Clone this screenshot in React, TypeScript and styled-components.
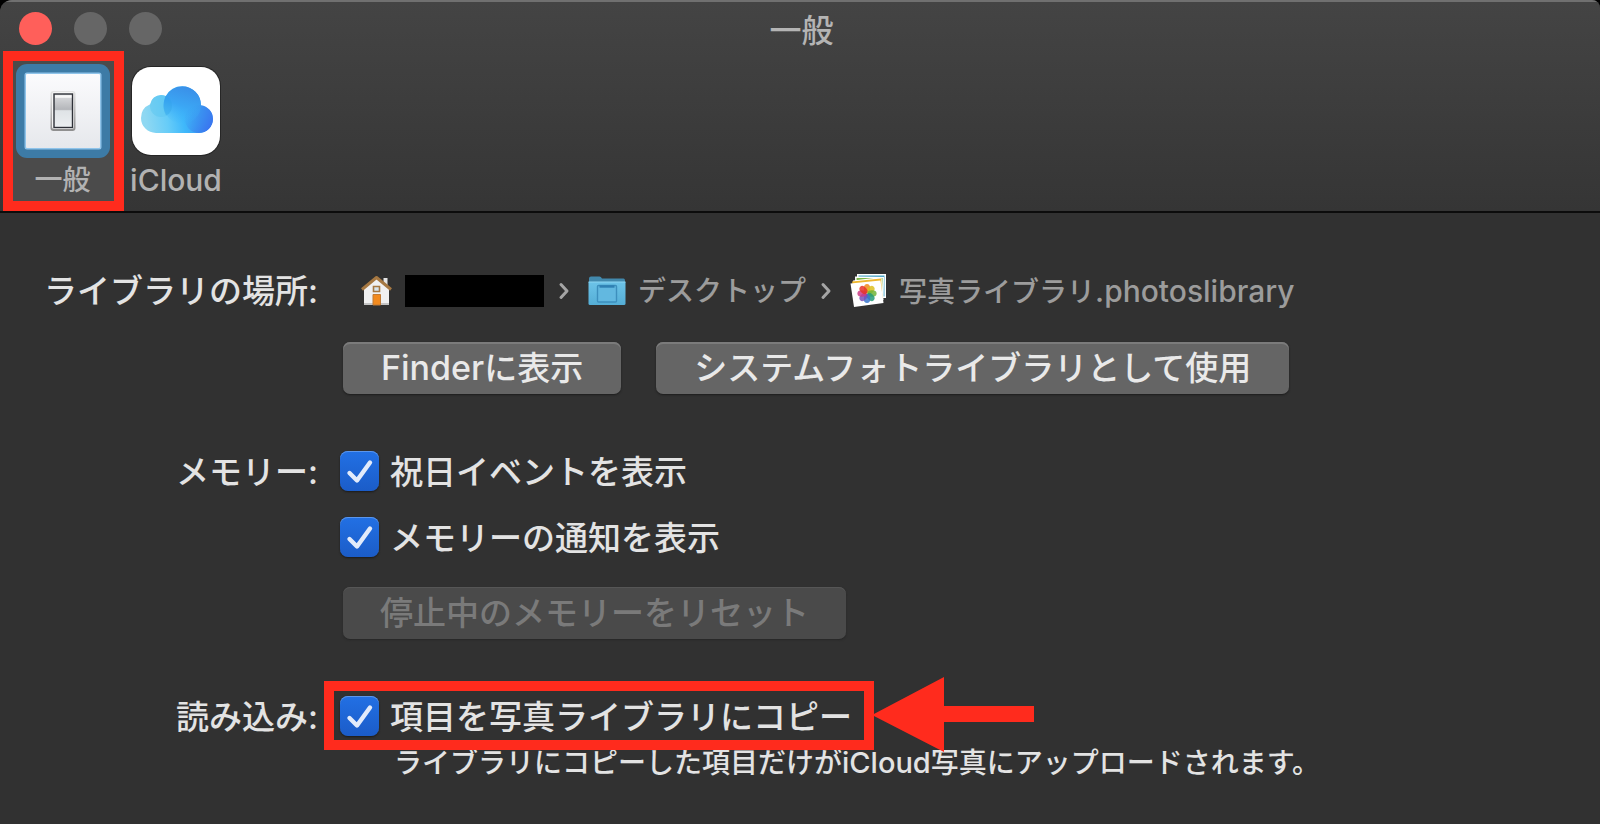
import React from "react";
import styled, { createGlobalStyle, css } from "styled-components";

const GlobalStyle = createGlobalStyle`
  *, *::before, *::after { box-sizing: border-box; }
  html { background: #000; }
  body {
    margin: 0;
    font-family: Inter, "Noto Sans CJK JP", sans-serif;
    font-weight: 500;
    color: #e3e3e3;
  }
`;

const red = "#ff2b1d";

const Window = styled.main`
  min-height: 100vh;
  background: #313131;
  border-radius: 12px 8px 0 0;
  overflow: hidden;
`;

const Header = styled.header`
  background: linear-gradient(#444444, #353535);
  border-top: 2px solid #707070;
  border-bottom: 2px solid #0c0c0c;
`;

const TitleBar = styled.div`
  display: grid;
  grid-template-columns: 1fr auto 1fr;
  align-items: start;
  height: 56px;
  padding: 10px 16px 0 19px;
`;

const Lights = styled.div`
  display: flex;
  gap: 22px;
`;

const Light = styled.button<{ $color: string }>`
  width: 33px;
  height: 33px;
  padding: 0;
  border: 0;
  border-radius: 50%;
  background: ${(p) => p.$color};
`;

const Title = styled.h1`
  margin: 0;
  font-size: 32px;
  line-height: 38px;
  font-weight: 500;
  color: #b4b4b4;
`;

const Toolbar = styled.nav`
  display: flex;
  align-items: flex-start;
  height: 153px;
  padding: 0 3px;
`;

const highlight = css`
  content: "";
  position: absolute;
  border: 10px solid ${red};
  pointer-events: none;
`;

const Tab = styled.button<{ $selected?: boolean }>`
  position: relative;
  display: flex;
  flex-direction: column;
  align-items: center;
  gap: 4px;
  min-width: 104px;
  height: 153px;
  padding: 6px 3px 0;
  border: 0;
  background: transparent;
  color: #b2b2b2;
  font-family: inherit;
  font-weight: inherit;
  font-size: 28px;
  line-height: 36px;

  ${(p) =>
    p.$selected &&
    css`
      min-width: 121px;
      padding-right: 5px;
      background: #4b4b4b;
      &::after {
        ${highlight}
        inset: -7px 0 0;
      }
    `}
`;

const TabIcon = styled.svg`
  display: block;
  width: 94px;
  height: 94px;
`;

const Latin = styled.span<{ $size: number }>`
  font-size: ${(p) => p.$size}px;
`;

const Form = styled.form`
  display: grid;
  grid-template-columns: 318px 1fr;
  column-gap: 22px;
  row-gap: 57px;
  padding-top: 54px;
  padding-bottom: 40px;
  font-size: 33px;
`;

const GroupLabel = styled.div<{ $tall?: boolean }>`
  text-align: right;
  white-space: nowrap;
  line-height: ${(p) => (p.$tall ? 48 : 42)}px;
`;

const Group = styled.div<{ $gap: number }>`
  display: flex;
  flex-direction: column;
  align-items: flex-start;
  gap: ${(p) => p.$gap}px;
`;

const Path = styled.div`
  display: flex;
  align-items: center;
  height: 48px;
  padding-left: 20px;
  font-size: 28px;
  line-height: 40px;
  color: #9c9c9c;
  white-space: nowrap;
`;

const PathIcon = styled.svg<{ $w: number }>`
  flex: none;
  width: ${(p) => p.$w}px;
  height: 36px;
  margin-right: 12px;
`;

const Redacted = styled.span`
  width: 139px;
  height: 32px;
  background: #000;
`;

const Chevron = styled.svg`
  flex: none;
  width: 12px;
  height: 18px;
  margin: 0 18px 0 14px;
`;

const Buttons = styled.div`
  display: flex;
  gap: 35px;
  padding-left: 3px;
`;

const PushButton = styled.button`
  height: 52px;
  padding: 0 38px;
  border: 0;
  border-radius: 7px;
  background: #656565;
  box-shadow: inset 0 2px 0 #7b7b7b, 0 1px 2px #1c1c1c;
  color: #e9e9e9;
  font-family: inherit;
  font-weight: inherit;
  font-size: 33px;
  line-height: 48px;
  white-space: nowrap;

  &:disabled {
    padding: 0 37px;
    background: #4a4a4a;
    box-shadow: inset 0 1px 0 #565656, 0 1px 2px #262626;
    color: #7a7a7a;
  }
`;

const Checks = styled.div`
  display: grid;
  gap: 24px;
  padding-bottom: 4px;
`;

const CheckLabel = styled.label<{ $marked?: boolean }>`
  position: relative;
  display: flex;
  align-items: flex-start;
  gap: 11px;
  height: 42px;
  line-height: 42px;
  white-space: nowrap;

  ${(p) =>
    p.$marked &&
    css`
      &::after {
        ${highlight}
        inset: -15px -22px -12px -16px;
        z-index: 1;
      }
    `}
`;

const CheckFrame = styled.span`
  display: grid;
  width: 39px;
  height: 40px;
  & > * {
    grid-area: 1 / 1;
  }
`;

const CheckInput = styled.input`
  appearance: none;
  width: 39px;
  height: 40px;
  margin: 0;
  border-radius: 8px;
  background: linear-gradient(#2270e4, #1b5cc8);
  box-shadow: inset 0 1px 0 #5b96ec, 0 1px 2px #1a1a1a;
`;

const CheckMark = styled.svg`
  width: 39px;
  height: 40px;
  pointer-events: none;
  visibility: hidden;
  ${CheckInput}:checked + & {
    visibility: visible;
  }
`;

const Arrow = styled.svg`
  position: absolute;
  left: calc(100% + 20px);
  top: -20px;
  width: 162px;
  height: 78px;
  z-index: 2;
`;

const Help = styled.p`
  margin: 0;
  padding-left: 54px;
  font-size: 28px;
  line-height: 40px;
  white-space: nowrap;
`;

function Check({ text, marked, children }: { text: string; marked?: boolean; children?: React.ReactNode }) {
  return (
    <CheckLabel $marked={marked}>
      <CheckFrame>
        <CheckInput type="checkbox" defaultChecked />
        <CheckMark viewBox="0 0 39 40" fill="none" stroke="#e2ebfb" strokeWidth="4.4" strokeLinecap="round" strokeLinejoin="round">
          <path d="M9.5 22 L17 29.5 L30 11.5" />
        </CheckMark>
      </CheckFrame>
      {text}
      {children}
    </CheckLabel>
  );
}

function SwitchIcon() {
  return (
    <TabIcon viewBox="0 0 94 94" aria-hidden="true">
      <defs>
        <linearGradient id="plate" x1="0" y1="0" x2="0" y2="1">
          <stop offset="0" stopColor="#fbfbfd" />
          <stop offset="1" stopColor="#e6e8ec" />
        </linearGradient>
        <linearGradient id="rim" x1="0" y1="0" x2="0" y2="1">
          <stop offset="0" stopColor="#e4e4e4" />
          <stop offset="1" stopColor="#8f8f8f" />
        </linearGradient>
        <linearGradient id="rocker" x1="0" y1="0" x2="0" y2="1">
          <stop offset="0" stopColor="#dfe0e2" />
          <stop offset="0.46" stopColor="#b4b6ba" />
          <stop offset="0.5" stopColor="#dfe3e6" />
          <stop offset="1" stopColor="#eceff1" />
        </linearGradient>
      </defs>
      <rect width="94" height="94" rx="11" fill="#3d7ba6" />
      <rect x="8.5" y="8.5" width="77" height="77" rx="2.5" fill="#8fc4ea" />
      <rect x="10" y="10" width="74" height="74" rx="1" fill="url(#plate)" />
      <rect x="34.5" y="27" width="25" height="40" rx="3" fill="url(#rim)" />
      <rect x="36" y="28" width="22" height="37" rx="2" fill="#f4f4f4" />
      <rect x="38" y="30" width="18.5" height="33.5" fill="url(#rocker)" stroke="#2e3138" strokeWidth="1.4" />
      <path d="M39 32.5h16.5" stroke="#f8f8f8" strokeWidth="2.5" />
    </TabIcon>
  );
}

function CloudIcon() {
  return (
    <TabIcon viewBox="0 0 94 94" aria-hidden="true">
      <defs>
        <linearGradient id="cloud" x1="0" y1="0.1" x2="1" y2="0">
          <stop offset="0" stopColor="#8fd8f2" />
          <stop offset="0.3" stopColor="#66ccf8" />
          <stop offset="0.52" stopColor="#3fb8fb" />
          <stop offset="0.75" stopColor="#3a9bf2" />
          <stop offset="1" stopColor="#3a78ee" />
        </linearGradient>
        <linearGradient id="puff" x1="0.6" y1="0" x2="0.3" y2="1">
          <stop offset="0" stopColor="#3a8fe8" />
          <stop offset="0.5" stopColor="#3ba6f4" />
          <stop offset="1" stopColor="#3fb8fb" stopOpacity="0" />
        </linearGradient>
        <linearGradient id="side" x1="0.2" y1="0.2" x2="1" y2="0.7">
          <stop offset="0" stopColor="#3a96ee" stopOpacity="0.1" />
          <stop offset="1" stopColor="#3a73f0" />
        </linearGradient>
        <clipPath id="outline">
          <circle cx="27" cy="54" r="15" />
          <circle cx="32" cy="42" r="11" />
          <circle cx="53.3" cy="41" r="18.7" />
          <circle cx="70" cy="55" r="14" />
          <rect x="27" y="42" width="43" height="27" />
        </clipPath>
      </defs>
      <rect x="2" y="2" width="90" height="90" rx="20" fill="#262626" />
      <rect x="3" y="3" width="88" height="88" rx="19" fill="#fff" />
      <g clipPath="url(#outline)">
        <rect x="12" y="22" width="72" height="47" fill="url(#cloud)" />
        <circle cx="32" cy="42" r="11" fill="#5cc6f0" opacity="0.5" />
        <circle cx="53.3" cy="41" r="18.7" fill="url(#puff)" />
        <circle cx="70" cy="55" r="14" fill="url(#side)" />
        <path d="M36 31.500a11 11 0 0 1 1 20A20 20 0 0 1 36 34z" fill="#2ea0e8" opacity="0.35" />
      </g>
    </TabIcon>
  );
}

function HomeIcon() {
  return (
    <PathIcon $w={33} viewBox="0 0 33 36" aria-hidden="true">
      <path d="M23.5 5h4v9h-4z" fill="#e4e4e4" />
      <path d="M4 15 16.5 5 29 15v17H4z" fill="#f0f0f1" />
      <path d="M4 30h25v2H4z" fill="#c4c4c4" />
      <path d="M2 16.5 16.5 4.5 31 16.5" fill="none" stroke="#a67842" strokeWidth="3" strokeLinejoin="round" />
      <path d="M13.5 13.5h6v5h-6z" fill="#d8e4ec" stroke="#a67842" strokeWidth="1.6" />
      <path d="M13 21.5h7.5V32H13z" fill="#f28a1e" stroke="#c07a35" />
    </PathIcon>
  );
}

function FolderIcon() {
  return (
    <PathIcon $w={38} viewBox="0 0 38 36" aria-hidden="true">
      <defs>
        <linearGradient id="folder" x1="0" y1="0" x2="0" y2="1">
          <stop offset="0" stopColor="#6cc3e8" />
          <stop offset="1" stopColor="#55aed6" />
        </linearGradient>
      </defs>
      <path d="M1 12V5.5Q1 3.500 3 3.500h8.500Q13 3.500 14 5.500h21.500q1.500 0 1.500 2V12z" fill="#4289ad" />
      <path d="M0.500 9h37v21.500q0 1.500-1.500 1.500H2q-1.500 0-1.500-1.500z" fill="url(#folder)" />
      <path d="M0.500 9h37" stroke="#8ed6f2" />
      <rect x="9.5" y="12.5" width="19" height="16.5" rx="1" fill="#62b8e0" stroke="#3d8fbd" strokeWidth="1.4" />
      <path d="M11.500 13.500h15" stroke="#2f80b3" strokeWidth="2.4" />
    </PathIcon>
  );
}

const petals = ["#f08a1c", "#dcc020", "#6fb43a", "#259a78", "#3876cc", "#7a4fb8", "#cc3a86", "#e63428"];

function PhotosIcon() {
  return (
    <PathIcon $w={37} viewBox="0 0 37 36" aria-hidden="true">
      <path d="M7 1h29v24h-3V5H7z" fill="#fff" />
      <path d="M8.5 2.5h26v21h-26z" fill="#4ba6c9" />
      <path d="M5 3.5 34 4l-.5 21-28-3z" fill="#fff" />
      <path d="M6.500 5h26l-.5 19-25-3z" fill="#7db547" />
      <path d="M3 7.500 31.500 4 33.500 27 6 30z" fill="#fff" />
      <path d="M2 8.500 31 5.500l1.500 20L6 28z" fill="#eeb72f" />
      <path d="M0.500 10.500 30.500 7.500 33.500 30 4 34z" fill="#fff" />
      {petals.map((color, i) => (
        <ellipse key={color} cx="17" cy="15.5" rx="3.2" ry="4.6" fill={color} opacity="0.85" transform={`rotate(${i * 45} 17 20.5)`} />
      ))}
    </PathIcon>
  );
}

function Separator() {
  return (
    <Chevron viewBox="0 0 12 18" fill="none" stroke="#a5a5a5" strokeWidth="3" strokeLinecap="round" strokeLinejoin="round" aria-hidden="true">
      <path d="M3 2.5 9 9 3 15.5" />
    </Chevron>
  );
}

export default function App() {
  return (
    <>
      <GlobalStyle />
      <Window>
        <Header>
          <TitleBar>
            <Lights>
              <Light type="button" aria-label="閉じる" $color="#ff5f5a" />
              <Light type="button" aria-label="しまう" $color="#666666" />
              <Light type="button" aria-label="拡大" $color="#666666" />
            </Lights>
            <Title>一般</Title>
          </TitleBar>
          <Toolbar>
            <Tab type="button" $selected>
              <SwitchIcon />
              一般
            </Tab>
            <Tab type="button">
              <CloudIcon />
              <Latin $size={30}>iCloud</Latin>
            </Tab>
          </Toolbar>
        </Header>
        <Form>
          <GroupLabel $tall>ライブラリの場所:</GroupLabel>
          <Group $gap={27}>
            <Path>
              <HomeIcon />
              <Redacted />
              <Separator />
              <FolderIcon />
              デスクトップ
              <Separator />
              <PhotosIcon />
              <span>
                写真ライブラリ<Latin $size={30}>.photoslibrary</Latin>
              </span>
            </Path>
            <Buttons>
              <PushButton type="button">
                <Latin $size={34}>Finder</Latin>に表示
              </PushButton>
              <PushButton type="button">システムフォトライブラリとして使用</PushButton>
            </Buttons>
          </Group>

          <GroupLabel>メモリー:</GroupLabel>
          <Group $gap={24}>
            <Checks>
              <Check text="祝日イベントを表示" />
              <Check text="メモリーの通知を表示" />
            </Checks>
            <Buttons>
              <PushButton type="button" disabled>
                停止中のメモリーをリセット
              </PushButton>
            </Buttons>
          </Group>

          <GroupLabel>読み込み:</GroupLabel>
          <Group $gap={5}>
            <Check text="項目を写真ライブラリにコピー" marked>
              <Arrow viewBox="0 0 162 78" aria-hidden="true">
                <path d="M0 39 72 1v29h90v16H72v30z" fill={red} />
              </Arrow>
            </Check>
            <Help>
              ライブラリにコピーした項目だけが<Latin $size={29}>iCloud</Latin>写真にアップロードされます。
            </Help>
          </Group>
        </Form>
      </Window>
    </>
  );
}
